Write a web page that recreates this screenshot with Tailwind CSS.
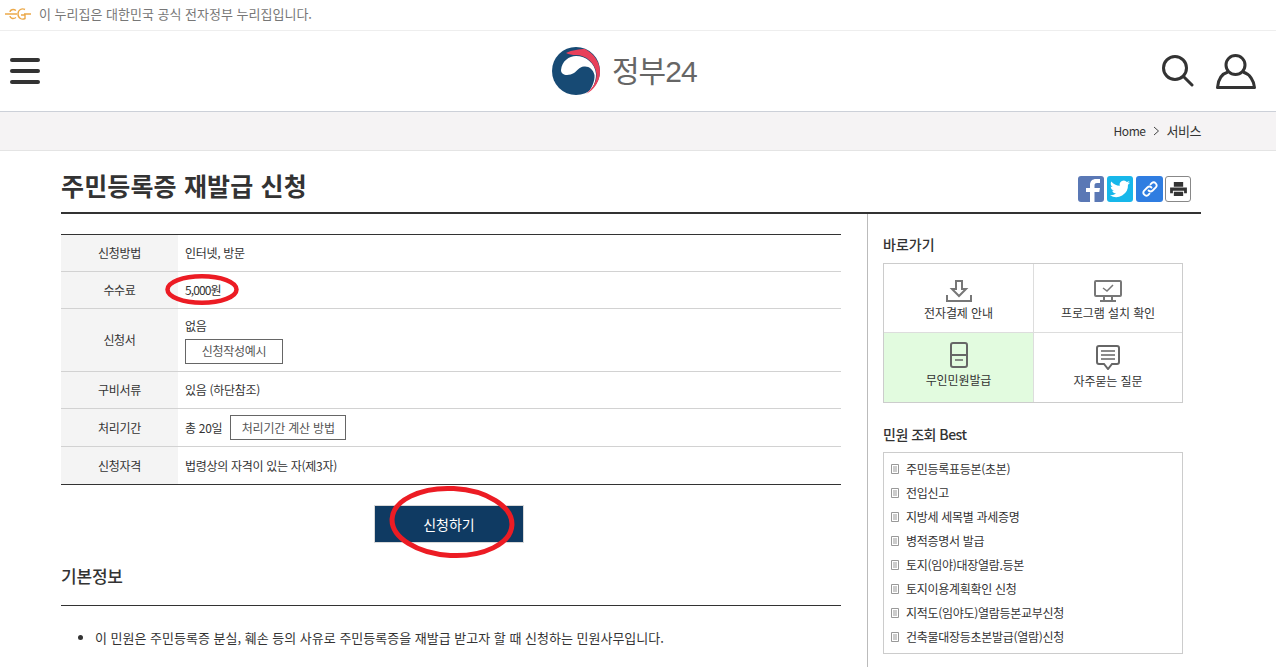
<!DOCTYPE html>
<html lang="ko">

<head>
    <meta charset="UTF-8">
    <meta name="viewport" content="width=device-width, initial-scale=1.0">
    <title>정부24 - 주민등록증 재발급 신청</title>
    <script src="https://cdn.jsdelivr.net/npm/@tailwindcss/browser@4"></script>
</head>

<body class="bg-white h-[667px] overflow-hidden font-['Noto_Sans_CJK_KR','Noto_Sans',sans-serif] text-[#333]">
    <!-- 공식 누리집 안내 -->
    <div class="h-[31px] border-b border-[#eee] flex items-center pl-[5px] text-[13px] text-[#777] pb-[2px]">
        <svg class="w-[26px] h-[12px] mr-[8px]" viewBox="0 0 26 12" fill="none" stroke="#eca94a" stroke-width="1.4">
            <path d="M0 6h6M4 6h8M20 1.5c-3-1.5-7 0-7 4.500s4 6 7 4.500V7h-4M19 6h7" />
            <path d="M11 2.500C8 .5 5 2 5 4M5 8c0 2 3 3.500 6 1.500" />
        </svg>
        <span>이 누리집은 대한민국 공식 전자정부 누리집입니다.</span>
    </div>

    <!-- 헤더 -->
    <header class="h-[81px] border-b border-[#ccd0d8] flex items-center justify-between pl-[10px] pr-[20px] relative">
        <div class="flex flex-col gap-[7px] w-[30px]">
            <span class="h-[4px] rounded-full bg-[#333]"></span>
            <span class="h-[4px] rounded-full bg-[#333]"></span>
            <span class="h-[4px] rounded-full bg-[#333]"></span>
        </div>
        <div class="absolute left-[552px] top-[16px] flex items-center gap-[12px]">
            <svg class="w-[48px] h-[48px]" viewBox="0 0 48 48">
                <circle cx="24" cy="24" r="24" fill="#174a74" />
                <path d="M9 23C10 14 17 9 24 9c10 0 19 7 20 18 0 8-3 15-9 20 5-6 8-13 7.500-19-1.500-6-5.500-9-10.500-8.500-5 .5-7 4.500-10 6.500-5 3-13 3-13-3z" fill="#fff" />
                <path d="M14 6c6-3 14-4 19-4 9 5 15 13 15 23 0 9-6 18-14 22 7-6 11-13 10.500-20C43.500 16 34 8 24 8c-4 0-7-.5-10-2z" fill="#e8405a" />
            </svg>
            <span class="text-[30px] leading-none text-[#666] tracking-[-1px] -mt-[2px]">정부<span class="font-['Liberation_Sans',sans-serif]">24</span></span>
        </div>
        <div class="flex items-center gap-[22px]">
            <svg class="w-[32px] h-[32px]" viewBox="0 0 32 32" fill="none" stroke="#333" stroke-width="3" stroke-linecap="round">
                <circle cx="13" cy="13" r="11.500" />
                <path d="M21.500 21.500l8.500 8.500" />
            </svg>
            <svg class="w-[40px] h-[35px]" viewBox="0 0 40 35" fill="none" stroke="#333" stroke-width="3" stroke-linejoin="round">
                <circle cx="19.500" cy="11" r="9.500" />
                <path d="M12 18C5 20 2 27 1.500 33.500h37C38 27 34 20 27 18" />
            </svg>
        </div>
    </header>

    <!-- 브레드크럼 -->
    <div class="h-[39px] bg-[#f5f3f4] border-b border-[#e4e4e4] flex items-center justify-end pr-[75px] text-[13px] tracking-[-0.5px]">
        <span class="text-[12px] tracking-[-0.4px]">Home</span>
        <svg class="w-[7px] h-[10px] mx-[7px]" viewBox="0 0 7 10" fill="none" stroke="#444">
            <path d="M1 1l4.500 4L1 9" />
        </svg>
        <span>서비스</span>
    </div>

    <main class="w-[1140px] ml-[61px]">
        <div class="h-[63px] border-b-2 border-[#333] flex items-center justify-between pt-[8px]">
            <h1 class="text-[25px] font-bold tracking-[0.15px] text-[#333]">주민등록증 재발급 신청</h1>
            <div class="flex gap-[3px] mr-[10px] mt-[6px]">
                <span class="w-[26px] h-[26px] rounded-[3px] bg-[#5a78b5] flex items-end justify-center overflow-hidden">
                    <svg class="w-[16px] h-[24px] ml-[4px]" viewBox="0 0 16 24" fill="#fff">
                        <path d="M5 24V14H1v-4h4V7c0-4 2.500-6 6-6h4v4h-3c-1.500 0-2.500.7-2.500 2.500V10H15l-.7 4H9.500v10z" />
                    </svg>
                </span>
                <span class="w-[26px] h-[26px] rounded-[3px] bg-[#17b7ea] flex items-center justify-center">
                    <svg class="w-[22px] h-[22px]" viewBox="0 0 24 24" fill="#fff">
                        <path d="M23 5c-.8.4-1.700.6-2.600.7.900-.6 1.600-1.400 2-2.500-.9.500-1.800.9-2.900 1.100A4.500 4.500 0 0 0 11.800 8.500C8 8.300 4.700 6.500 2.500 3.800c-1.200 2.100-.6 4.700 1.400 6-.7 0-1.400-.2-2-.6 0 2.200 1.500 4 3.600 4.500-.7.200-1.400.2-2 .1.600 1.800 2.200 3 4.200 3.100A9 9 0 0 1 1 18.800 12.800 12.800 0 0 0 20.700 7.400c.9-.6 1.700-1.400 2.300-2.400z" />
                    </svg>
                </span>
                <span class="w-[27px] h-[26px] rounded-[3px] bg-[#2f7de1] flex items-center justify-center">
                    <svg class="w-[18px] h-[18px]" viewBox="0 0 18 18" fill="none" stroke="#fff" stroke-width="1.800" stroke-linecap="round">
                        <path d="M7.500 10.500a3 3 0 0 0 4.200 0l3.300-3.300a3 3 0 0 0-4.200-4.200L9.500 4.300" />
                        <path d="M10.500 7.500a3 3 0 0 0-4.200 0L3 10.800A3 3 0 0 0 7.200 15l1.300-1.300" />
                    </svg>
                </span>
                <span class="w-[26px] h-[26px] -ml-[1px] rounded-[3px] border border-[#888] bg-white flex items-center justify-center">
                    <svg class="w-[17px] h-[14px]" viewBox="0 0 18 15" fill="#333">
                        <path d="M4 0h10v5H4zM0 6h18v6h-3V9.500H3V12H0zM4 10.500h10V15H4z" />
                    </svg>
                </span>
            </div>
        </div>

        <div class="flex items-stretch h-[454px]">
            <!-- 본문 -->
            <section class="w-[780px] pt-[20px] relative">
                <table class="w-full border-collapse text-[12px] tracking-[-0.3px] border-t border-b border-t-[#333] border-b-[#333]">
                    <tbody>
                        <tr class="h-[37px] border-b border-[#d2d2d2]">
                            <th class="w-[117px] bg-[#f4f4f4] font-normal">신청방법</th>
                            <td class="pl-[7px]">인터넷, 방문</td>
                        </tr>
                        <tr class="h-[37px] border-b border-[#d2d2d2]">
                            <th class="bg-[#f4f4f4] font-normal">수수료</th>
                            <td class="pl-[7px] tracking-[-0.9px]">5,000원</td>
                        </tr>
                        <tr class="h-[63px] border-b border-[#d2d2d2]">
                            <th class="bg-[#f4f4f4] font-normal">신청서</th>
                            <td class="pl-[7px]">
                                <div class="leading-[18px] mb-[4px]">없음</div>
                                <span class="inline-flex items-center justify-center w-[98px] h-[25px] border border-[#666] text-[#555]">신청작성예시</span>
                            </td>
                        </tr>
                        <tr class="h-[37px] border-b border-[#d2d2d2]">
                            <th class="bg-[#f4f4f4] font-normal">구비서류</th>
                            <td class="pl-[7px]">있음 (하단참조)</td>
                        </tr>
                        <tr class="h-[38px] border-b border-[#d2d2d2]">
                            <th class="bg-[#f4f4f4] font-normal">처리기간</th>
                            <td class="pl-[7px]">총 20일<span class="inline-flex items-center justify-center w-[116px] h-[25px] ml-[8px] border border-[#666] text-[#555] tracking-[-0.2px]">처리기간 계산 방법</span></td>
                        </tr>
                        <tr class="h-[38px]">
                            <th class="bg-[#f4f4f4] font-normal">신청자격</th>
                            <td class="pl-[7px]">법령상의 자격이 있는 자(제3자)</td>
                        </tr>
                    </tbody>
                </table>

                <div class="flex justify-center mt-[20px] pr-[4px]">
                    <span class="w-[150px] h-[38px] bg-[#0f3a62] border border-[#d8d8d8] text-white text-[14px] flex items-center justify-center">신청하기</span>
                </div>

                <h2 class="text-[17px] font-medium mt-[20px] leading-[26px] tracking-[-0.2px]">기본정보</h2>
                <div class="border-t border-[#333] mt-[16px]"></div>
                <ul class="list-disc pl-[34px] mt-[22px] text-[13px] leading-[20px]">
                    <li>이 민원은 주민등록증 분실, 훼손 등의 사유로 주민등록증을 재발급 받고자 할 때 신청하는 민원사무입니다.</li>
                </ul>

                <!-- 빨간 표시 -->
                <svg class="absolute left-[103px] top-[59px] w-[76px] h-[34px]" viewBox="0 0 76 34" fill="none" stroke="#ec1c24" stroke-width="4.500">
                    <ellipse cx="38" cy="16.500" rx="34.500" ry="13.300" />
                </svg>
                <svg class="absolute left-[328px] top-[271px] w-[126px] h-[74px]" viewBox="0 0 126 74" fill="none" stroke="#ec1c24" stroke-width="5">
                    <ellipse cx="63" cy="37" rx="60" ry="33.500" transform="rotate(3 63 37)" />
                </svg>
            </section>

            <div class="w-[27px] border-r border-[#bbb]"></div>

            <!-- 사이드 -->
            <aside class="pl-[15px] w-[316px]">
                <h3 class="text-[14px] font-medium pt-[20px] h-[49px] leading-[21px] tracking-[0px]">바로가기</h3>
                <div class="w-[300px] h-[140px] border border-[#ccc] grid grid-cols-[150px_1fr] grid-rows-2 text-[12px] tracking-[-0.1px]">
                    <div class="border-r border-b border-[#ddd] flex flex-col items-center pt-[16px]">
                        <svg class="w-[26px] h-[23px]" viewBox="0 0 26 23" fill="none" stroke="#777" stroke-width="2">
                            <path d="M10 1h6v8h4l-7 7-7-7h4z" />
                            <path d="M1 15v6h24v-6" />
                        </svg>
                        <span class="mt-[1px] leading-[18px]">전자결제 안내</span>
                    </div>
                    <div class="border-b border-[#ddd] flex flex-col items-center pt-[16px]">
                        <svg class="w-[28px] h-[22px]" viewBox="0 0 28 22" fill="none" stroke="#777" stroke-width="2">
                            <rect x="1" y="1" width="26" height="15" rx="1" />
                            <path d="M9 8l4 3 6-6" stroke-width="1.500" />
                            <path d="M10 16v4M18 16v4M6 21h16" />
                        </svg>
                        <span class="mt-[2px] leading-[18px]">프로그램 설치 확인</span>
                    </div>
                    <div class="border-r border-[#ddd] bg-[#e2fbdf] flex flex-col items-center pt-[9px]">
                        <svg class="w-[18px] h-[26px]" viewBox="0 0 18 26" fill="none" stroke="#666" stroke-width="2">
                            <rect x="1" y="1" width="16" height="24" rx="2" />
                            <path d="M1 13h16" />
                            <path d="M5 18h8" stroke-width="1.500" />
                        </svg>
                        <span class="mt-[3px] leading-[18px]">무인민원발급</span>
                    </div>
                    <div class="flex flex-col items-center pt-[12px]">
                        <svg class="w-[24px] h-[25px]" viewBox="0 0 24 25" fill="none" stroke="#666" stroke-width="2">
                            <path d="M3 1h18a2 2 0 0 1 2 2v14a2 2 0 0 1-2 2h-5l-4 5-4-5H3a2 2 0 0 1-2-2V3a2 2 0 0 1 2-2z" />
                            <path d="M5 6h14M5 10h14M5 14h14" stroke-width="1.500" />
                        </svg>
                        <span class="mt-[2px] leading-[18px]">자주묻는 질문</span>
                    </div>
                </div>

                <h3 class="text-[14px] font-medium mt-[21px] leading-[21px] tracking-[-0.5px]">민원 조회 Best</h3>
                <ul class="w-[300px] h-[202px] mt-[7px] border border-[#ccc] pt-[4px] pl-[7px] text-[12px] tracking-[-0.3px]">
                    <li class="h-[24px] flex items-center gap-[7px]"><svg class="w-[8px] h-[10px] shrink-0" viewBox="0 0 8 10" fill="none" stroke="#999"><path d="M.5.500h7v9h-7zM2 3h4M2 5h4M2 7h4" /></svg>주민등록표등본(초본)</li>
                    <li class="h-[24px] flex items-center gap-[7px]"><svg class="w-[8px] h-[10px] shrink-0" viewBox="0 0 8 10" fill="none" stroke="#999"><path d="M.5.500h7v9h-7zM2 3h4M2 5h4M2 7h4" /></svg>전입신고</li>
                    <li class="h-[24px] flex items-center gap-[7px]"><svg class="w-[8px] h-[10px] shrink-0" viewBox="0 0 8 10" fill="none" stroke="#999"><path d="M.5.500h7v9h-7zM2 3h4M2 5h4M2 7h4" /></svg>지방세 세목별 과세증명</li>
                    <li class="h-[24px] flex items-center gap-[7px]"><svg class="w-[8px] h-[10px] shrink-0" viewBox="0 0 8 10" fill="none" stroke="#999"><path d="M.5.500h7v9h-7zM2 3h4M2 5h4M2 7h4" /></svg>병적증명서 발급</li>
                    <li class="h-[24px] flex items-center gap-[7px]"><svg class="w-[8px] h-[10px] shrink-0" viewBox="0 0 8 10" fill="none" stroke="#999"><path d="M.5.500h7v9h-7zM2 3h4M2 5h4M2 7h4" /></svg>토지(임야)대장열람.등본</li>
                    <li class="h-[24px] flex items-center gap-[7px]"><svg class="w-[8px] h-[10px] shrink-0" viewBox="0 0 8 10" fill="none" stroke="#999"><path d="M.5.500h7v9h-7zM2 3h4M2 5h4M2 7h4" /></svg>토지이용계획확인 신청</li>
                    <li class="h-[24px] flex items-center gap-[7px]"><svg class="w-[8px] h-[10px] shrink-0" viewBox="0 0 8 10" fill="none" stroke="#999"><path d="M.5.500h7v9h-7zM2 3h4M2 5h4M2 7h4" /></svg>지적도(임야도)열람등본교부신청</li>
                    <li class="h-[24px] flex items-center gap-[7px]"><svg class="w-[8px] h-[10px] shrink-0" viewBox="0 0 8 10" fill="none" stroke="#999"><path d="M.5.500h7v9h-7zM2 3h4M2 5h4M2 7h4" /></svg>건축물대장등초본발급(열람)신청</li>
                </ul>
            </aside>
        </div>
    </main>
</body>

</html>
